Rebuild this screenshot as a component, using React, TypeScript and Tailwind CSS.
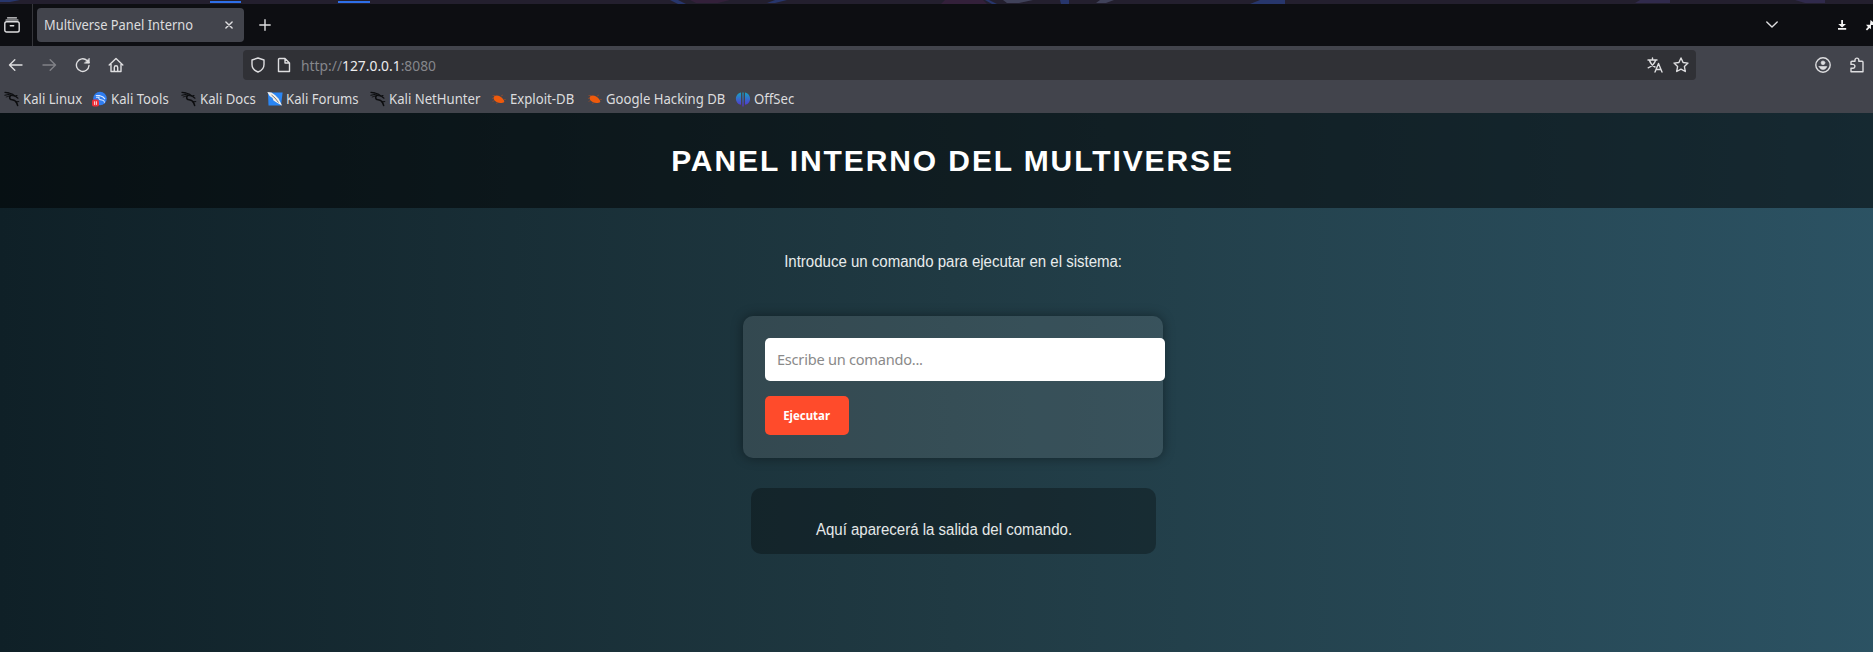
import React from "react";

const kali = (
  <g fill="none" stroke="#0c0d0f" strokeLinecap="round" strokeLinejoin="round">
    <path d="M1 1.3 5 2 8.800 3.400 10.500 4.800" strokeWidth="1.300" />
    <path d="M.8 4.200 4.500 3.500 7.500 4.600" strokeWidth="1.100" />
    <path d="M2.200 6 5 5.200" strokeWidth=".8" />
    <path d="M7 4.200C4.800 6 5.400 8.600 8 8.800c3 .2 4.600 1.400 5.600 5.600" strokeWidth="1.600" />
    <path d="M8.500 4.600 11 5 14 7.200M11 5 13 4.600" strokeWidth="1.100" />
    <path d="M11.500 10.800 14.800 10.600" strokeWidth="1" />
  </g>
);

function Icon({ kind }: { kind: string }) {
  return (
    <svg className="size-4 shrink-0" viewBox="0 0 16 16">
      {kind === "kali" && kali}
      {kind === "tools" && (
        <>
          <circle cx="8" cy="7.500" r="6.800" fill="#2f7df0" />
          <path d="M3.800 4.500 7.500 4.500 11 6 13 8M4 6.300 7 6.100C6.300 8.500 8 8.800 10 9s2.400 1 2.600 2.600" stroke="#dbe9ff" strokeWidth="1.100" fill="none" />
          <rect x="0" y="8.600" width="7" height="7" rx="1.800" fill="#ea3038" />
          <path d="M2.600 10.300v3.600M4.400 10.300v3.600" stroke="#ffd9dc" strokeWidth="1" />
        </>
      )}
      {kind === "forums" && (
        <>
          <path d="M1 1.500H15.600L14 14.500H1.500Z" fill="#2a86f4" />
          <path d="M.3 1 4.400 1.400 8 4 11.500 7.500 15.200 14.800 10 11.800 6.500 9.500 5.500 7 2.600 5Z" fill="#f2f0ec" />
          <path d="M4.500 4 8 7 11.500 11.500" stroke="#55585d" strokeWidth="0.800" fill="none" />
        </>
      )}
      {kind === "bug" && (
        <>
          <path d="M2.600 6.500C3.100 4.300 6.200 3.700 9.200 5.400c2.600 1.600 4.600 4.300 4 5.600-1 1.200-4.800 1.600-7.200.3C3.800 10.200 2.200 8.300 2.600 6.500Z" fill="#ee5a0c" />
          <path d="M4.500 4.500 1.500 4.500M3.500 9 1.500 11M7 11.500 5 12.500M10 5 12 4M13 8.500 14.800 8.500M2.800 7 1 7.500" stroke="#9c4a26" strokeWidth="0.700" />
        </>
      )}
      {kind === "offsec" && (
        <>
          <defs>
            <linearGradient id="offsec" x1="0" y1="0" x2="0" y2="1">
              <stop offset="0" stopColor="#17a3c4" />
              <stop offset="1" stopColor="#5a2bd0" />
            </linearGradient>
          </defs>
          <path d="M6 1.500V13.700C3.500 13.500 .9 11 .9 7.700S3.400 1.900 6 1.500ZM10 1.500c2.600.4 5.100 2.900 5.100 6.200S12.500 13.500 10 13.700ZM7.400 1.500h1.200v14H7.400Z" fill="url(#offsec)" />
        </>
      )}
    </svg>
  );
}

const bookmarks = [
  { k: "kali", t: "Kali Linux", w: "w-[88px]" },
  { k: "tools", t: "Kali Tools", w: "w-[89px]" },
  { k: "kali", t: "Kali Docs", w: "w-[86px]" },
  { k: "forums", t: "Kali Forums", w: "w-[103px]" },
  { k: "kali", t: "Kali NetHunter", w: "w-[121px]" },
  { k: "bug", t: "Exploit-DB", w: "w-[96px]" },
  { k: "bug", t: "Google Hacking DB", w: "w-[148px]" },
  { k: "offsec", t: "OffSec", w: "w-[80px]" },
];

const line = { fill: "none", stroke: "#dedee0", strokeWidth: 1.4, strokeLinecap: "round", strokeLinejoin: "round" } as const;

export default function App() {
  return (
    <div className="flex h-[652px] w-[1873px] flex-col overflow-hidden bg-[#0d0e12] font-['Noto_Sans',sans-serif] text-[#dcdcde]">
      <svg className="block h-1 w-full shrink-0" viewBox="0 0 1873 4" preserveAspectRatio="none">
        <rect width="1873" height="4" fill="#231f2e" />
        <path d="M0 0H20L10 2H0ZM670 0h8l8 4h-8ZM775 0h12l-12 3h-8ZM985 0h4l8 4h-5ZM1060 0h9v4h-8ZM1260 0h25v4h-35Z" fill="#27366c" />
        <path d="M1003 0h30l-14 3h-12ZM1100 0h14l-8 3h-10Z" fill="#40425a" />
        <path d="M690 0h40l-12 3h-22ZM945 0h38l4 4h-46Z" fill="#33203a" />
        <path d="M1640 0h30v3h-35ZM1795 0h30v3h-20Z" fill="#302a4c" />
        <path d="M210 1h31v2h-31ZM338 1h32v2h-32Z" fill="#2d6fe8" />
      </svg>
      <div className="flex h-[42px] shrink-0 items-center">
        <svg className="ml-1 size-4" viewBox="0 0 16 16" {...line}>
          <path d="M3.500 .8h9M2 3h12" strokeWidth="1.200" />
          <rect x=".8" y="4.800" width="14.400" height="10.200" rx="1.800" />
          <path d="M6.300 8.800h3.400" />
        </svg>
        <div className="ml-3 h-full w-px bg-[#35363b]" />
        <div className="ml-1 flex h-[34px] w-[207px] items-center justify-between rounded bg-[#42444c] pr-[11px] pl-[7px]">
          <svg className="h-5 w-[150px] overflow-visible" fill="#dcdcde">
            <text x="0" y="15" fontSize="13.800" textLength="149" lengthAdjust="spacingAndGlyphs">Multiverse Panel Interno</text>
          </svg>
          <svg className="size-2" viewBox="0 0 8 8" {...line}><path d="M.9.9 7.100 7.100M7.100.9.9 7.100" /></svg>
        </div>
        <svg className="ml-[15px] size-3" viewBox="0 0 12 12" {...line}><path d="M6 .8v10.400M.8 6h10.400" /></svg>
        <svg className="ml-auto h-3 w-3" viewBox="0 0 12 12" {...line}><path d="m.8 3 5.200 5 5.200-5" /></svg>
        <svg className="ml-[58px] size-3" viewBox="0 0 12 12" fill="#f4f4f4"><path d="M5.200 1h1.800v4h3L6.100 8.500 2.200 5h3ZM2 9h8.200v1.800H2Z" /></svg>
        <svg className="ml-[17px] h-3 w-2" viewBox="0 0 8 12" fill="#f4f4f4"><path d="M5.500 1 8 3V6H5ZM1 5.800h5v4.500L4.500 9 2 11.500.8 10.300 3 8Z" /></svg>
      </div>
      <div className="flex h-[38px] shrink-0 items-center bg-[#42444c]">
        <svg className="ml-2 h-4 w-4" viewBox="0 0 16 16" {...line}><path d="M14 8H1.500M6.800 2.800 1.500 8 6.800 13.200" /></svg>
        <svg className="ml-[17px] h-4 w-4 opacity-40" viewBox="0 0 16 16" {...line}><path d="M2 8h12.500M9.200 2.800 14.500 8 9.200 13.200" /></svg>
        <svg className="ml-[18px] size-4" viewBox="0 0 16 16" {...line}><path d="M14 8.500A6.300 6.300 0 1 1 12 3.500L14 5.500" /><path d="M14.300 1.500v4.700H9.600Z" fill="#dedee0" strokeWidth=".6" /></svg>
        <svg className="ml-[17px] size-4" viewBox="0 0 16 16" {...line}><path d="M1.200 8 8 1.500 14.800 8M3 7v7.500h10V7M6.300 14V10.500a1.700 1.700 0 0 1 3.400 0V14" /></svg>
        <div className="ml-[119px] flex h-[30px] w-[1453px] items-center rounded bg-[#303136] px-[7px]">
          <svg className="size-4" viewBox="0 0 16 16" {...line}><path d="M8 1 14 3v4.500C14 11 11.500 13.700 8 15 4.500 13.700 2 11 2 7.500V3Z" /></svg>
          <svg className="ml-[10px] size-4" viewBox="0 0 16 16" {...line}><path d="M3.500 1.500h5.500L13.500 6v8.500h-11V2.500a1 1 0 0 1 1-1ZM9 1.500V6h4.500" /></svg>
          <svg className="ml-[9px] h-5 w-36" fill="#85868b">
            <text x="0" y="15.500" fontSize="14.200" textLength="135" lengthAdjust="spacingAndGlyphs">http://<tspan fill="#ececee">127.0.0.1</tspan>:8080</text>
          </svg>
          <svg className="ml-auto size-4" viewBox="0 0 16 16" {...line}><path d="M1 3h9M5.500 1v2M2.500 3.500C3.500 6.500 6 9 8 10M8.500 3.500C7.500 6.500 4.500 9.500 1.200 10.800M8 15l3.500-8.500L15 15M9.300 12.500h4.500" /></svg>
          <svg className="ml-[10px] size-4" viewBox="0 0 16 16" {...line}><path d="m8 1 2.100 4.500 4.900.6-3.600 3.400.9 5L8 12.100l-4.300 2.400.9-5L1 6.100l4.900-.6Z" /></svg>
        </div>
        <svg className="ml-[119px] size-4" viewBox="0 0 16 16" {...line}>
          <circle cx="8" cy="8" r="7.200" />
          <circle cx="8" cy="5.800" r="1.900" fill="#dedee0" strokeWidth=".6" />
          <path d="M4.200 9.500h7.600c-.5 2-2 3-3.800 3S4.700 11.500 4.200 9.500Z" fill="#dedee0" strokeWidth=".6" />
        </svg>
        <svg className="ml-[18px] size-4" viewBox="0 0 16 16" {...line}><path d="M2 7V5.200a1 1 0 0 1 1-1h3V3a1.900 1.900 0 0 1 3.800 0v1.200H13a1 1 0 0 1 1 1V14.800H2V11.200h2a1.900 1.900 0 0 0 0-3.800H2Z" /></svg>
      </div>
      <div className="flex h-[29px] shrink-0 items-start bg-[#42444c] pl-1">
        {bookmarks.map((b) => (
          <div key={b.t} className={"flex shrink-0 items-center gap-[3px] pt-[5px] " + b.w}>
            <Icon kind={b.k} />
            <span className="origin-left scale-x-[0.96] text-[13.7px] leading-5 whitespace-nowrap">{b.t}</span>
          </div>
        ))}
      </div>
      <main className="flex w-[1905px] shrink-0 grow flex-col items-center bg-[linear-gradient(to_right,#0f2027,#203a43,#2c5364)] font-['Liberation_Sans',sans-serif] text-white">
        <header className="flex h-[95px] w-full items-center justify-center bg-black/50">
          <h1 className="text-[30px] font-bold tracking-[1.9px]">PANEL INTERNO DEL MULTIVERSE</h1>
        </header>
        <p className="mt-[42px] ml-px scale-x-[0.938] text-base text-[#e8ecec]">Introduce un comando para ejecutar en el sistema:</p>
        <form className="mt-[42px] h-[142px] w-[420px] rounded-[10px] bg-white/10 pt-[22px] pl-[22.5px] font-['Noto_Sans',sans-serif] shadow-[0_0_12px_rgba(0,0,0,0.4)]">
          <input className="block h-[43px] w-[400px] rounded-[5px] bg-white px-[12px] pb-px text-[14.6px] tracking-[-0.25px] placeholder:text-[#8a8a8a]" placeholder="Escribe un comando..." />
          <button type="button" className="mt-[15px] h-[39px] w-[84px] rounded-[5px] bg-[#ff4b2b] text-xs font-bold"><span className="inline-block scale-x-[0.95]">Ejecutar</span></button>
        </form>
        <div className="mt-[30px] ml-px h-[66px] w-[405px] rounded-[10px] bg-black/30 pt-[30px] pr-[19px] text-center text-base text-[#e4e8e8]">
          <p className="scale-x-[0.938]">Aquí aparecerá la salida del comando.</p>
        </div>
      </main>
    </div>
  );
}
